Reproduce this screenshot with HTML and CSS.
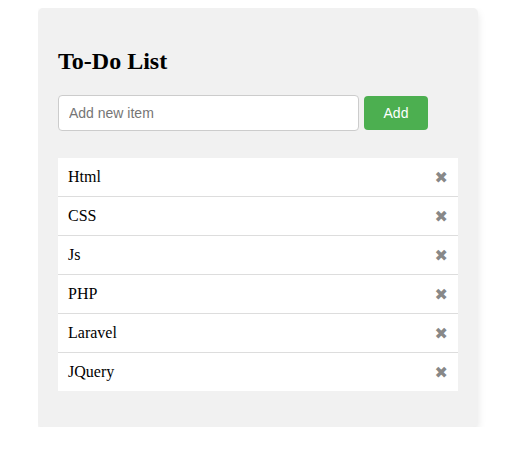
FILE: index.html
```html
<!DOCTYPE html>
<html>
<head>
<meta charset="utf-8">
<link rel="stylesheet" href="styles.css">
</head>
<body>
<div class="container">
  <h2 class="title">To-Do List</h2>
  <div class="add-row">
    <input class="add-input" type="text" placeholder="Add new item">
    <button class="add-btn">Add</button>
  </div>
  <ul class="todo-list">
    <li class="todo-item"><span>Html</span><span class="remove">✖</span></li>
    <li class="todo-item"><span>CSS</span><span class="remove">✖</span></li>
    <li class="todo-item"><span>Js</span><span class="remove">✖</span></li>
    <li class="todo-item"><span>PHP</span><span class="remove">✖</span></li>
    <li class="todo-item"><span>Laravel</span><span class="remove">✖</span></li>
    <li class="todo-item"><span>JQuery</span><span class="remove">✖</span></li>
  </ul>
</div>
</body>
</html>
```

FILE: styles.css
```css
body {
  margin: 8px 0 0 38px;
  font-family: "Liberation Serif", serif;
  background: #fff;
}
.container {
  width: 400px;
  padding: 20px;
  background: #f1f1f1;
  border-radius: 5px;
  box-shadow: 0 4px 8px rgba(0, 0, 0, 0.1);
}
.title {
  font-size: 24px;
  font-weight: bold;
  margin: 20px 0;
  line-height: 27px;
}
.add-row {
  display: flex;
  align-items: center;
  gap: 5px;
  margin-bottom: 27px;
}
.add-input {
  box-sizing: border-box;
  width: 301px;
  height: 36px;
  padding: 0 10px;
  border: 1px solid #ccc;
  border-radius: 4px;
  font-family: "Liberation Sans", Arial, sans-serif;
  font-size: 14px;
  outline: none;
  margin: 0;
}
.add-input::placeholder {
  color: #757575;
}
.add-btn {
  box-sizing: border-box;
  width: 64px;
  height: 34px;
  border: none;
  border-radius: 4px;
  background: #4caf50;
  color: #fff;
  font-family: "Liberation Sans", Arial, sans-serif;
  font-size: 14px;
  margin: 0;
  padding: 0;
}
.todo-list {
  list-style: none;
  margin: 0 0 16px;
  padding: 0;
}
.todo-item {
  display: flex;
  justify-content: space-between;
  align-items: center;
  height: 38px;
  padding: 0 10px 0 10px;
  background: #fff;
  border-bottom: 1px solid #ddd;
  font-size: 16px;
}
.todo-item:last-child {
  border-bottom: none;
}
.remove {
  color: #888;
  font-family: "DejaVu Sans", sans-serif;
  font-size: 16px;
}
```
